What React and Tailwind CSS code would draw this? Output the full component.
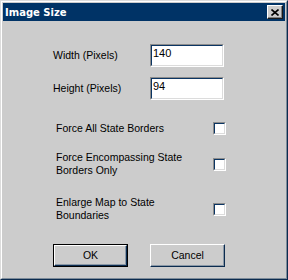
function Sunken({ className = '', children }) {
  return (
    <div className={`border border-t-[#8c8c8c] border-l-[#8c8c8c] border-r-white border-b-white ${className}`}>
      <div className="h-full border border-t-[#0b3563] border-l-[#0b3563] border-r-[#dcdcdc] border-b-[#dcdcdc] bg-white">
        {children}
      </div>
    </div>
  )
}

function CheckRow({ label, className = '' }) {
  return (
    <div className={`flex items-center pl-[3px] ${className}`}>
      <div className="w-[140px] leading-[13px]">{label}</div>
      <Sunken className="ml-[17px] w-[13px] h-[13px]" />
    </div>
  )
}

export default function App() {
  return (
    <div className="w-[288px] h-[280px] bg-[#cccccc] text-black text-[10.5px] font-['Liberation_Sans',Arial,sans-serif]">
      <div className="h-full border border-t-[#dcdcdc] border-l-[#dcdcdc] border-r-[#0b2b4f] border-b-[#0b2b4f]">
        <div className="h-full flex flex-col p-px border border-t-white border-l-white border-r-[#7d8b99] border-b-[#7d8b99]">
          <div className="h-[18px] flex items-center justify-between bg-[#003366] pl-[2px] pr-[2px]">
            <span className="text-white font-bold text-[10px] font-['DejaVu_Sans',Verdana,sans-serif]">Image Size</span>
            <div className="w-[16px] h-[14px] flex items-center justify-center bg-[#cccccc] border border-t-white border-l-white border-r-[#1a1a1a] border-b-[#1a1a1a] shadow-[inset_-1px_-1px_0_#808080]">
              <svg width="8" height="7" viewBox="0 0 8 7">
                <path d="M0.5 0.5 L7.5 6.5 M7.5 0.5 L0.5 6.5" stroke="black" strokeWidth="1.6" />
              </svg>
            </div>
          </div>

          <div className="flex-1 flex flex-col pl-[50px]">
            <div className="mt-[23px] flex items-center h-[23px]">
              <div className="w-[97px]">Width (Pixels)</div>
              <Sunken className="w-[74px] h-[23px]">
                <div className="pl-[1px] pt-px leading-[13px] text-[11px]">140</div>
              </Sunken>
            </div>
            <div className="mt-[10px] flex items-center h-[23px]">
              <div className="w-[97px]">Height (Pixels)</div>
              <Sunken className="w-[74px] h-[23px]">
                <div className="pl-[1px] pt-px leading-[13px] text-[11px]">94</div>
              </Sunken>
            </div>

            <CheckRow className="mt-[22px]" label="Force All State Borders" />
            <CheckRow className="mt-[16px]" label="Force Encompassing State Borders Only" />
            <CheckRow className="mt-[19px]" label="Enlarge Map to State Boundaries" />

            <div className="mt-[22px] flex gap-[22px]">
              <div className="w-[75px] h-[23px] border border-black">
                <div className="h-full flex items-center justify-center border border-t-white border-l-white border-r-[#0b2b4f] border-b-[#0b2b4f] shadow-[inset_-1px_-1px_0_#8a98a6]">
                  OK
                </div>
              </div>
              <div className="w-[75px] h-[23px] flex items-center justify-center border border-t-white border-l-white border-r-[#0b2b4f] border-b-[#0b2b4f] shadow-[inset_-1px_-1px_0_#8a98a6]">
                Cancel
              </div>
            </div>
          </div>
        </div>
      </div>
    </div>
  )
}
